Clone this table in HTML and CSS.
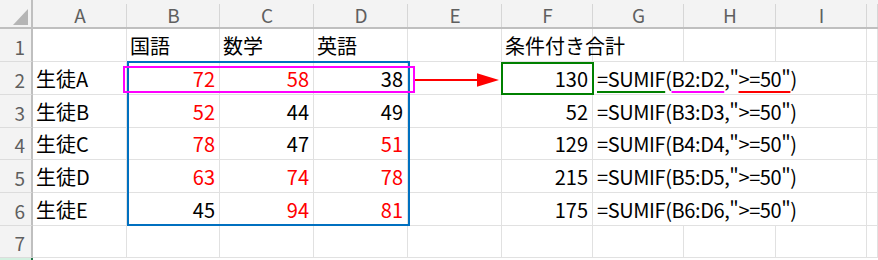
FILE: index.html
```html
<!doctype html>
<html lang="ja">

<head>
    <meta charset="UTF-8">
    <title>SUMIF 条件付き合計</title>
    <link rel="stylesheet" href="styles.css">
</head>

<body>
    <div class="sheet">
        <!-- 列見出し -->
        <div class="corner"><span class="tri"></span></div>
        <div class="col-head">A</div>
        <div class="col-head">B</div>
        <div class="col-head">C</div>
        <div class="col-head">D</div>
        <div class="col-head">E</div>
        <div class="col-head">F</div>
        <div class="col-head">G</div>
        <div class="col-head">H</div>
        <div class="col-head">I</div>
        <div class="col-head"></div>

        <!-- 1 -->
        <div class="row-head">1</div>
        <div class="cell"></div>
        <div class="cell">国語</div>
        <div class="cell">数学</div>
        <div class="cell">英語</div>
        <div class="cell"></div>
        <div class="cell">条件付き合計</div>
        <div class="cell"></div>
        <div class="cell"></div>
        <div class="cell"></div>
        <div class="cell"></div>

        <!-- 2 -->
        <div class="row-head">2</div>
        <div class="cell">生徒A</div>
        <div class="cell num red">72</div>
        <div class="cell num red">58</div>
        <div class="cell num">38</div>
        <div class="cell"></div>
        <div class="cell num">130</div>
        <div class="cell formula"><span class="ul-green">=SUMIF</span>(<span class="ul-pink">B2:D2</span>,"<span class="ul-red">&gt;=50"</span>)</div>
        <div class="cell"></div>

        <!-- 3 -->
        <div class="row-head">3</div>
        <div class="cell">生徒B</div>
        <div class="cell num red">52</div>
        <div class="cell num">44</div>
        <div class="cell num">49</div>
        <div class="cell"></div>
        <div class="cell num">52</div>
        <div class="cell formula">=SUMIF(B3:D3,"&gt;=50")</div>
        <div class="cell"></div>

        <!-- 4 -->
        <div class="row-head">4</div>
        <div class="cell">生徒C</div>
        <div class="cell num red">78</div>
        <div class="cell num">47</div>
        <div class="cell num red">51</div>
        <div class="cell"></div>
        <div class="cell num">129</div>
        <div class="cell formula">=SUMIF(B4:D4,"&gt;=50")</div>
        <div class="cell"></div>

        <!-- 5 -->
        <div class="row-head">5</div>
        <div class="cell">生徒D</div>
        <div class="cell num red">63</div>
        <div class="cell num red">74</div>
        <div class="cell num red">78</div>
        <div class="cell"></div>
        <div class="cell num">215</div>
        <div class="cell formula">=SUMIF(B5:D5,"&gt;=50")</div>
        <div class="cell"></div>

        <!-- 6 -->
        <div class="row-head">6</div>
        <div class="cell">生徒E</div>
        <div class="cell num">45</div>
        <div class="cell num red">94</div>
        <div class="cell num red">81</div>
        <div class="cell"></div>
        <div class="cell num">175</div>
        <div class="cell formula">=SUMIF(B6:D6,"&gt;=50")</div>
        <div class="cell"></div>

        <!-- 7 -->
        <div class="row-head">7</div>
        <div class="cell"></div>
        <div class="cell"></div>
        <div class="cell"></div>
        <div class="cell"></div>
        <div class="cell"></div>
        <div class="cell"></div>
        <div class="cell"></div>
        <div class="cell"></div>
        <div class="cell"></div>
        <div class="cell"></div>

        <!-- 8 (選択中の行) -->
        <div class="row-head sel"></div>

        <!-- 範囲の囲みと矢印 -->
        <div class="box box-blue"></div>
        <div class="box box-pink"></div>
        <div class="box box-green"></div>
        <svg class="arrow" width="85" height="16" viewBox="0 0 85 16">
            <line x1="0" y1="8" x2="63" y2="8" stroke="#ff0000" stroke-width="2" />
            <polygon points="62,1.3 84,8 62,14.7" fill="#ff0000" />
        </svg>
    </div>
</body>

</html>
```

FILE: styles.css
```css
* {
    margin: 0;
    padding: 0;
    box-sizing: border-box;
}

body {
    width: 878px;
    height: 260px;
    overflow: hidden;
    background: #fff;
    font-family: "Noto Sans CJK JP", "Noto Sans", sans-serif;
}

.sheet {
    position: relative;
    display: grid;
    grid-template-columns: 33px 94px 93px 94px 94px 94px 91px 91px 92px 91px 1fr;
    grid-template-rows: 29px 33px 33px 33px 32px 33px 33px 32px 1fr;
    width: 878px;
    height: 260px;
    overflow: hidden;
}

/* 見出し */
.corner {
    display: flex;
    justify-content: flex-end;
    align-items: flex-end;
    padding: 0 3px 2px 0;
    background: #f3f3f3;
    border-right: 2px solid #bfbfbf;
    border-bottom: 2px solid #bfbfbf;
}

.corner .tri {
    width: 0;
    height: 0;
    border-left: 15px solid transparent;
    border-bottom: 16px solid #b5b5b5;
}

.col-head {
    display: flex;
    justify-content: center;
    align-items: center;
    padding-top: 3px;
    font-size: 19px;
    line-height: 20px;
    color: #5f5f5f;
    background: linear-gradient(#d6d6d6, #d6d6d6) no-repeat right 0 top 4px / 1px calc(100% - 4px), #f3f3f3;
    border-bottom: 2px solid #bfbfbf;
}

.row-head {
    display: flex;
    justify-content: flex-end;
    align-items: center;
    padding: 3px 6px 0 0;
    font-size: 19px;
    line-height: 20px;
    color: #5f5f5f;
    background: #f3f3f3;
    border-right: 2px solid #bfbfbf;
    border-bottom: 1px solid #dcdcdc;
}

.row-head.sel {
    background: #d3f0e0;
    border-right-color: #217346;
}

/* セル */
.cell {
    display: flex;
    align-items: flex-end;
    padding: 0 3px 5px 3px;
    font-size: 20px;
    line-height: 20px;
    color: #000;
    white-space: nowrap;
    border-right: 1px solid #e1e1e1;
    border-bottom: 1px solid #e1e1e1;
}

.cell.num {
    justify-content: flex-end;
    padding-right: 4px;
}

.cell.red {
    color: #ff0000;
}

/* 数式は G:I にはみ出して表示 */
.cell.formula {
    grid-column: span 3;
    padding-left: 4px;
    letter-spacing: -0.4px;
}

.ul-green,
.ul-pink,
.ul-red {
    text-decoration: underline;
    text-decoration-thickness: 2px;
    text-underline-offset: 4px;
}

.ul-green {
    text-decoration-color: #008000;
}

.ul-pink {
    text-decoration-color: #ff00ff;
}

.ul-red {
    text-decoration-color: #ff0000;
}

/* 囲み */
.box {
    position: absolute;
    border: 2px solid;
}

.box-blue {
    left: 127px;
    top: 61px;
    width: 283px;
    height: 165px;
    border-color: #0070c0;
}

.box-pink {
    left: 123px;
    top: 66px;
    width: 292px;
    height: 27px;
    border-color: #ff00ff;
}

.box-green {
    left: 501px;
    top: 62px;
    width: 93px;
    height: 33px;
    border-color: #008000;
}

.arrow {
    position: absolute;
    left: 415px;
    top: 72px;
}
```
